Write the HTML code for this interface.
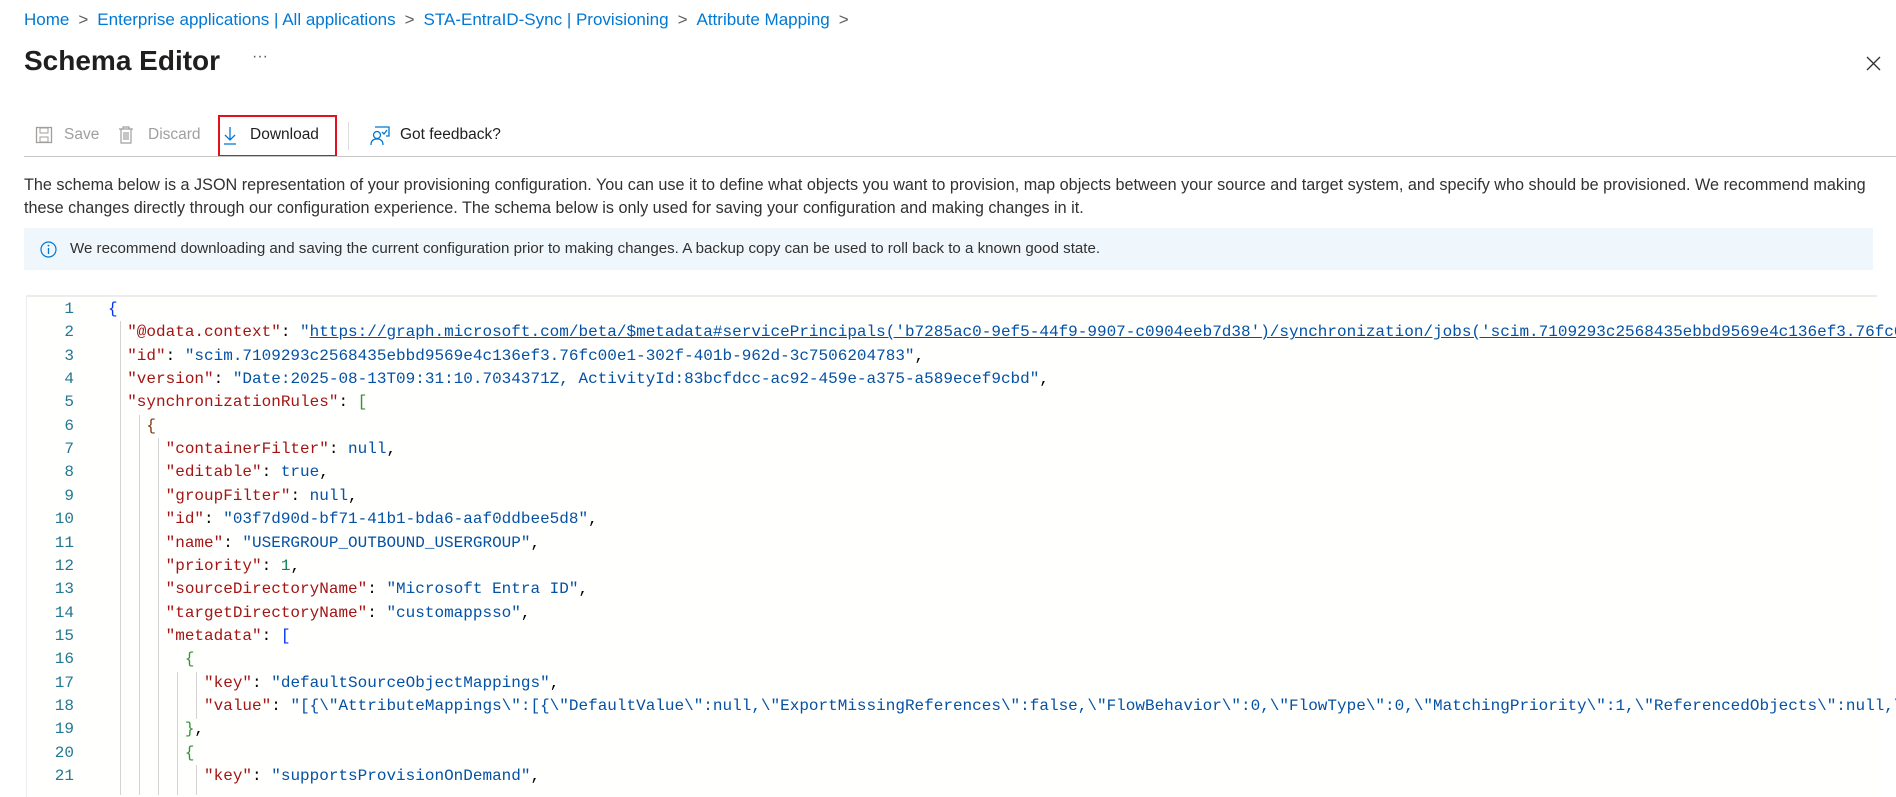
<!DOCTYPE html>
<html><head><meta charset="utf-8"><style>
html,body{margin:0;padding:0;width:1896px;height:795px;overflow:hidden;background:#fff;font-family:"Liberation Sans",sans-serif;color:#323130}
.a{position:absolute;white-space:nowrap}
.bc{top:10px;left:24px;font-size:17px;color:#0078d4}
.bc span.s{color:#605e5c;margin:0 9px}
.title{top:45px;left:24px;font-size:28px;font-weight:bold;color:#201f1e}
.tb{font-size:15.5px;top:126px}
.desc{left:24px;font-size:16.2px;color:#323130;line-height:23px;top:174px}
.info{left:24px;top:228px;width:1849px;height:42px;background:#eff6fc}
.editor{left:26px;top:295px;width:1850px;height:500px;border-top:2px solid #ececec;border-left:1px solid #ececec;background:#fffffe}
.code{font-family:"Liberation Mono",monospace;font-size:16px;overflow:hidden}
.ln{position:absolute;left:0;width:74px;text-align:right;color:#237893}
.cl{position:absolute;left:108px;white-space:pre;color:#000}
.k{color:#a31515}.v{color:#0451a5}.n{color:#098658}
.b1{color:#0431fa}.b2{color:#319331}.b3{color:#7b3814}
.g{position:absolute;width:1px;background:#d3d3d3}
</style></head><body>
<div class="a bc">Home<span class="s">&gt;</span>Enterprise applications | All applications<span class="s">&gt;</span>STA-EntraID-Sync | Provisioning<span class="s">&gt;</span>Attribute Mapping<span class="s">&gt;</span></div>
<div class="a title">Schema Editor</div>
<div class="a" style="top:48px;left:252px;font-size:16px;color:#605e5c">···</div>
<svg class="a" style="left:1866px;top:56px" width="15" height="15"><path d="M1 1L14 14M14 1L1 14" stroke="#323130" stroke-width="1.3"/></svg>

<svg class="a" style="left:35px;top:126px" width="18" height="18"><rect x="1.5" y="1.5" width="15" height="15" fill="none" stroke="#a19f9d" stroke-width="1.3"/><rect x="5" y="2" width="8" height="5" fill="none" stroke="#a19f9d"/><rect x="5" y="11" width="8" height="5" fill="none" stroke="#a19f9d"/></svg>
<div class="a tb" style="left:64px;color:#a19f9d">Save</div>
<svg class="a" style="left:117px;top:125px" width="18" height="20"><path d="M2 4H16M6 4V2H12V4M4 4V18H14V4M7 7V15M9 7V15M11 7V15" fill="none" stroke="#a19f9d" stroke-width="1.2"/></svg>
<div class="a tb" style="left:148px;color:#a19f9d">Discard</div>
<div class="a" style="left:218px;top:115px;width:115px;height:38px;border:2px solid #e3101f"></div>
<svg class="a" style="left:222px;top:126px" width="16" height="20"><path d="M8 1V14M3 9L8 14L13 9M2 18H14" fill="none" stroke="#0078d4" stroke-width="1.3"/></svg>
<div class="a tb" style="left:250px;color:#201f1e">Download</div>
<div class="a" style="left:348px;top:122px;width:1px;height:28px;background:#e1dfdd"></div>
<svg class="a" style="left:369px;top:124px" width="22" height="22"><path d="M6 3H20V12H17" fill="none" stroke="#0078d4" stroke-width="1.3"/><circle cx="8" cy="11" r="3.5" fill="none" stroke="#0078d4" stroke-width="1.3"/><path d="M2 21C2 16 5 15 8 15C11 15 14 16 14 21" fill="none" stroke="#0078d4" stroke-width="1.3"/><path d="M13 8L15 10L18 6" fill="none" stroke="#0078d4" stroke-width="1.3"/></svg>
<div class="a tb" style="left:400px;color:#201f1e">Got feedback?</div>
<div class="a" style="left:24px;top:156px;width:1872px;height:1px;background:#c8c6c4"></div>

<div class="a desc">The schema below is a JSON representation of your provisioning configuration. You can use it to define what objects you want to provision, map objects between your source and target system, and specify who should be provisioned. We recommend making<br>these changes directly through our configuration experience. The schema below is only used for saving your configuration and making changes in it.</div>
<div class="a info"></div>
<svg class="a" style="left:40px;top:241px" width="17" height="17"><circle cx="8.5" cy="8.5" r="7.5" fill="none" stroke="#0078d4" stroke-width="1.2"/><path d="M8.5 7V13" stroke="#0078d4" stroke-width="1.3"/><circle cx="8.5" cy="4.6" r="0.9" fill="#0078d4"/></svg>
<div class="a" style="left:70px;top:240px;font-size:15.1px;color:#323130">We recommend downloading and saving the current configuration prior to making changes. A backup copy can be used to roll back to a known good state.</div>

<div class="a editor"></div>
<div class="a code" style="left:0;top:298px;width:1896px;height:497px">
<div class="g" style="left:120px;top:23px;height:474px"></div>
<div class="g" style="left:139px;top:117px;height:380px"></div>
<div class="g" style="left:158px;top:140px;height:357px"></div>
<div class="g" style="left:177px;top:374px;height:123px"></div>
<div class="g" style="left:196px;top:374px;height:47px"></div>
<div class="g" style="left:196px;top:467px;height:30px"></div>
</div>
<div class="a code" style="left:0;top:298px;width:1896px;height:497px;line-height:23.35px">
<div class="ln" style="top:0">1</div><div class="cl" style="top:0"><span class="b1">{</span></div>
<div class="ln" style="top:23.35px">2</div><div class="cl" style="top:23.35px">  <span class="k">"@odata.context"</span>: <span class="v">"<u>https://graph.microsoft.com/beta/$metadata#servicePrincipals('b7285ac0-9ef5-44f9-9907-c0904eeb7d38')/synchronization/jobs('scim.7109293c2568435ebbd9569e4c136ef3.76fc00e1</u></span></div>
<div class="ln" style="top:46.7px">3</div><div class="cl" style="top:46.7px">  <span class="k">"id"</span>: <span class="v">"scim.7109293c2568435ebbd9569e4c136ef3.76fc00e1-302f-401b-962d-3c7506204783"</span>,</div>
<div class="ln" style="top:70.05px">4</div><div class="cl" style="top:70.05px">  <span class="k">"version"</span>: <span class="v">"Date:2025-08-13T09:31:10.7034371Z, ActivityId:83bcfdcc-ac92-459e-a375-a589ecef9cbd"</span>,</div>
<div class="ln" style="top:93.4px">5</div><div class="cl" style="top:93.4px">  <span class="k">"synchronizationRules"</span>: <span class="b2">[</span></div>
<div class="ln" style="top:116.75px">6</div><div class="cl" style="top:116.75px">    <span class="b3">{</span></div>
<div class="ln" style="top:140.1px">7</div><div class="cl" style="top:140.1px">      <span class="k">"containerFilter"</span>: <span class="v">null</span>,</div>
<div class="ln" style="top:163.45px">8</div><div class="cl" style="top:163.45px">      <span class="k">"editable"</span>: <span class="v">true</span>,</div>
<div class="ln" style="top:186.8px">9</div><div class="cl" style="top:186.8px">      <span class="k">"groupFilter"</span>: <span class="v">null</span>,</div>
<div class="ln" style="top:210.15px">10</div><div class="cl" style="top:210.15px">      <span class="k">"id"</span>: <span class="v">"03f7d90d-bf71-41b1-bda6-aaf0ddbee5d8"</span>,</div>
<div class="ln" style="top:233.5px">11</div><div class="cl" style="top:233.5px">      <span class="k">"name"</span>: <span class="v">"USERGROUP_OUTBOUND_USERGROUP"</span>,</div>
<div class="ln" style="top:256.85px">12</div><div class="cl" style="top:256.85px">      <span class="k">"priority"</span>: <span class="n">1</span>,</div>
<div class="ln" style="top:280.2px">13</div><div class="cl" style="top:280.2px">      <span class="k">"sourceDirectoryName"</span>: <span class="v">"Microsoft Entra ID"</span>,</div>
<div class="ln" style="top:303.55px">14</div><div class="cl" style="top:303.55px">      <span class="k">"targetDirectoryName"</span>: <span class="v">"customappsso"</span>,</div>
<div class="ln" style="top:326.9px">15</div><div class="cl" style="top:326.9px">      <span class="k">"metadata"</span>: <span class="b1">[</span></div>
<div class="ln" style="top:350.25px">16</div><div class="cl" style="top:350.25px">        <span class="b2">{</span></div>
<div class="ln" style="top:373.6px">17</div><div class="cl" style="top:373.6px">          <span class="k">"key"</span>: <span class="v">"defaultSourceObjectMappings"</span>,</div>
<div class="ln" style="top:396.95px">18</div><div class="cl" style="top:396.95px">          <span class="k">"value"</span>: <span class="v">"[{\"AttributeMappings\":[{\"DefaultValue\":null,\"ExportMissingReferences\":false,\"FlowBehavior\":0,\"FlowType\":0,\"MatchingPriority\":1,\"ReferencedObjects\":null,\"</span></div>
<div class="ln" style="top:420.3px">19</div><div class="cl" style="top:420.3px">        <span class="b2">}</span>,</div>
<div class="ln" style="top:443.65px">20</div><div class="cl" style="top:443.65px">        <span class="b2">{</span></div>
<div class="ln" style="top:467px">21</div><div class="cl" style="top:467px">          <span class="k">"key"</span>: <span class="v">"supportsProvisionOnDemand"</span>,</div>
</div>
</body></html>
